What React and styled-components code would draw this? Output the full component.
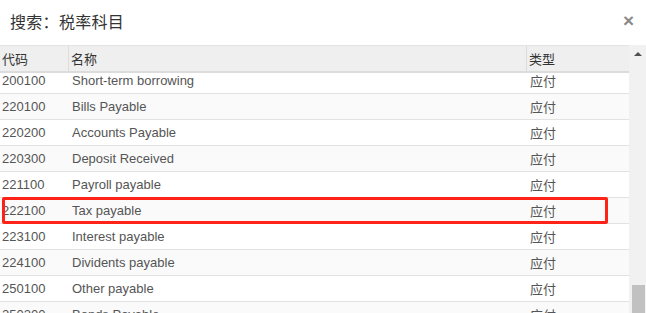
import styled, { createGlobalStyle } from 'styled-components'

const GlobalStyle = createGlobalStyle`
    html, body {
        margin: 0;
        padding: 0;
        background: #fff;
        overflow: hidden;
    }
    body {
        font-family: "Liberation Sans", "Noto Sans CJK SC", sans-serif;
    }
`

const rows = [
    ["200100", "Short-term borrowing"],
    ["220100", "Bills Payable"],
    ["220200", "Accounts Payable"],
    ["220300", "Deposit Received"],
    ["221100", "Payroll payable"],
    ["222100", "Tax payable"],
    ["223100", "Interest payable"],
    ["224100", "Dividents payable"],
    ["250100", "Other payable"],
    ["250200", "Bonds Payable"],
]

const App = () => {
    return (
        <Dialog>
            <GlobalStyle />
            <TitleBar>
                <Title>搜索：税率科目</Title>
                <Close>×</Close>
            </TitleBar>
            <Grid>
                <TableWrap>
                    <HeadRow>
                        <HeadCell w="69px" divider>代码</HeadCell>
                        <HeadCell w="458px" divider>名称</HeadCell>
                        <HeadCell w="102px">类型</HeadCell>
                    </HeadRow>
                    <Body>
                        <Scrolled>
                            {rows.map(([code, name], i) => (
                                <Row key={code} alt={i % 2 === 1}>
                                    <Cell w="69px">{code}</Cell>
                                    <Cell w="458px" pad="3px">{name}</Cell>
                                    <Cell w="102px" pad="3px">应付</Cell>
                                </Row>
                            ))}
                        </Scrolled>
                        <Highlight />
                    </Body>
                </TableWrap>
                <ScrollBar>
                    <Arrow />
                    <Thumb />
                </ScrollBar>
            </Grid>
        </Dialog>
    )
}

export default App

const Dialog = styled.div`
    width: 646px;
    height: 313px;
    display: flex;
    flex-direction: column;
    overflow: hidden;
`

const TitleBar = styled.div`
    height: 45px;
    display: flex;
    align-items: center;
    justify-content: space-between;
    padding: 0 12px 4px 10px;
    box-sizing: border-box;
`

const Title = styled.h4`
    margin: 0;
    font-size: 16px;
    font-weight: normal;
    color: #333;
    letter-spacing: 0.3px;
`

const Close = styled.span`
    font-size: 19px;
    font-weight: bold;
    color: #8a8a8a;
    line-height: 1;
    cursor: pointer;
`

const Grid = styled.div`
    flex: 1;
    display: flex;
    min-height: 0;
`

const TableWrap = styled.div`
    width: 629px;
    display: flex;
    flex-direction: column;
    border-top: 1px solid #e4e4e4;
`

const HeadRow = styled.div`
    display: flex;
    height: 25px;
    background: #efefef;
    border-bottom: 2px solid #dcdcdc;
`

const HeadCell = styled.div`
    width: ${p => p.w};
    box-sizing: border-box;
    display: flex;
    align-items: center;
    padding-left: 2px;
    font-size: 13px;
    color: #333;
    border-right: ${p => (p.divider ? "1px solid #dcdcdc" : "none")};
`

const Body = styled.div`
    flex: 1;
    position: relative;
    overflow: hidden;
`

const Scrolled = styled.div`
    margin-top: -5px;
`

const Row = styled.div`
    display: flex;
    height: 26px;
    box-sizing: border-box;
    border-bottom: 1px solid #e2e2e2;
    background: ${p => (p.alt ? "#fafafa" : "#fff")};
`

const Cell = styled.div`
    width: ${p => p.w};
    box-sizing: border-box;
    display: flex;
    align-items: center;
    padding-left: ${p => p.pad || "2px"};
    font-size: 13px;
    color: #555;
    white-space: nowrap;
`

const Highlight = styled.div`
    position: absolute;
    left: 2px;
    top: 124px;
    width: 606px;
    height: 27px;
    box-sizing: border-box;
    border: 3px solid #ff2217;
    border-radius: 2px;
    pointer-events: none;
`

const ScrollBar = styled.div`
    width: 17px;
    background: #f1f1f1;
    display: flex;
    flex-direction: column;
    align-items: center;
    justify-content: space-between;
`

const Arrow = styled.div`
    margin-top: 7px;
    width: 0;
    height: 0;
    border-left: 4px solid transparent;
    border-right: 4px solid transparent;
    border-bottom: 4px solid #505050;
`

const Thumb = styled.div`
    width: 13px;
    height: 28px;
    margin-left: 1px;
    background: #c1c1c1;
`
